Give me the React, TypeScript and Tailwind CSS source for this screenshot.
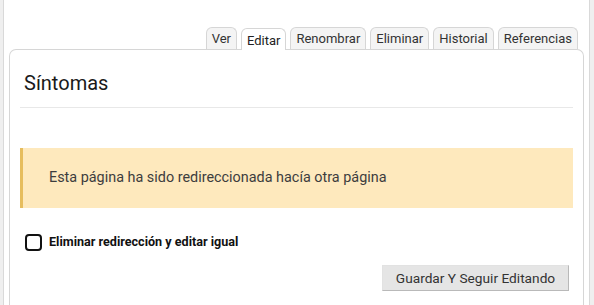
const tabs = ["Ver", "Editar", "Renombrar", "Eliminar", "Historial", "Referencias"];

export default function App() {
  return (
    <div className="min-h-[305px] bg-[#efefef] pl-[3px] pr-[4px] font-['Roboto',sans-serif] text-[#333]">
      <div className="min-h-[305px] border-x border-[#d9d9d9] bg-white px-[5px] pt-[27px]">
        <div className="flex justify-end gap-[4px] pr-[6px]">
          {tabs.map((tab) => {
            const active = tab === "Editar";
            return (
              <div
                key={tab}
                className={
                  active
                    ? "relative z-10 -mb-px mt-[1px] h-[22px] rounded-t-[6px] border border-b-0 border-[#d6d6d6] bg-white px-[5px] pt-[3px] text-[13px] leading-[18px] text-[#222]"
                    : "h-[22px] rounded-t-[6px] border border-b-0 border-[#d6d6d6] bg-[#f4f4f4] px-[5px] pt-[2px] text-[13px] leading-[18px] text-[#333]"
                }
              >
                {tab}
              </div>
            );
          })}
        </div>
        <div className="min-h-[257px] rounded-t-[7px] border border-b-0 border-[#d6d6d6] px-[10px]">
          <div className="border-b border-[#e8e8e8] pb-[11px] pl-[4px] pt-[20px]">
            <h1 className="text-[20px] leading-[26px] text-[#1a1a1a]">Síntomas</h1>
          </div>
          <div className="mt-[40px] flex h-[60px] items-center border-l-[3px] border-[#e6bd5e] bg-[#fee9bd] pl-[26px] text-[14.4px] text-[#3d3d3d]">
            Esta página ha sido redireccionada hacía otra página
          </div>
          <label className="mt-[25px] flex items-center gap-[7px] pl-[5px]">
            <span className="block h-[17px] w-[17px] rounded-[4px] border-2 border-[#111] bg-white" />
            <span className="text-[12.6px] font-bold text-[#111]">Eliminar redirección y editar igual</span>
          </label>
          <div className="mt-[13px] flex justify-end pr-[4px]">
            <button className="h-[26px] w-[187px] border border-[#e2e2e2] border-b-[#b9b9b9] border-r-[#b9b9b9] bg-[#e5e5e5] text-[13.7px] text-[#333]">
              Guardar Y Seguir Editando
            </button>
          </div>
        </div>
      </div>
    </div>
  );
}
